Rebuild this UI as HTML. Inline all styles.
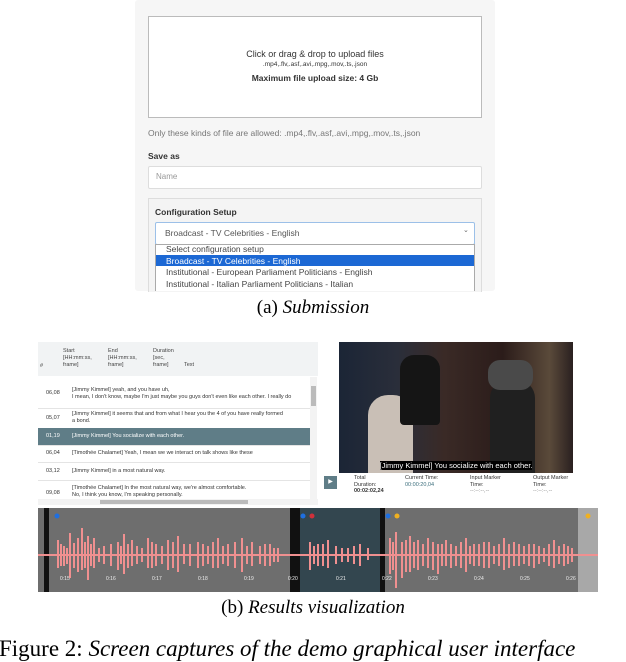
<!DOCTYPE html>
<html><head><style>
body{margin:0;width:626px;height:654px;background:#fff;position:relative;overflow:hidden;font-family:"Liberation Sans",sans-serif}
.a{position:absolute}
.s{font-size:8px;color:#333}
.row{position:absolute;left:38px;width:272px;border-bottom:1px solid #e4e4e4;font-size:5.5px;color:#333}
.row .n{position:absolute;left:8px}
.row .t{position:absolute;left:34px;line-height:7px}
</style></head><body>
<div class="a" style="left:135px;top:0;width:360px;height:291px;background:#f6f6f6;border-radius:3px"></div>
<div class="a" style="left:148px;top:16px;width:332px;height:100px;border:1px solid #bbb;background:#fff"></div>
<div class="a s" style="left:148px;top:49px;width:334px;text-align:center;font-size:9px">Click or drag &amp; drop to upload files</div>
<div class="a s" style="left:148px;top:61px;width:334px;text-align:center;font-size:6.5px">.mp4,.flv,.asf,.avi,.mpg,.mov,.ts,.json</div>
<div class="a s" style="left:148px;top:73px;width:334px;text-align:center;font-size:8.5px;font-weight:bold">Maximum file upload size: 4 Gb</div>
<div class="a" style="left:148px;top:128px;font-size:8.5px;color:#777">Only these kinds of file are allowed: .mp4,.flv,.asf,.avi,.mpg,.mov,.ts,.json</div>
<div class="a" style="left:148px;top:151px;font-size:8.5px;font-weight:bold;color:#333">Save as</div>
<div class="a" style="left:148px;top:166px;width:332px;height:21px;border:1px solid #ddd;background:#fff;border-radius:2px"></div>
<div class="a" style="left:156px;top:172px;font-size:8px;color:#999">Name</div>
<div class="a" style="left:148px;top:198px;width:332px;height:93px;border:1px solid #ddd;border-bottom:none;background:#f4f4f4"></div>
<div class="a" style="left:155px;top:207px;font-size:8.5px;font-weight:bold;color:#333">Configuration Setup</div>
<div class="a" style="left:155px;top:222px;width:318px;height:21px;border:1px solid #9cc0e8;background:#fff;border-radius:2px"></div>
<div class="a" style="left:165px;top:228px;font-size:8.5px;color:#555">Broadcast - TV Celebrities - English</div>
<div class="a" style="left:463px;top:226px;font-size:7px;color:#666">⌄</div>
<div class="a" style="left:155px;top:244px;width:318px;height:46px;border:1px solid #aaa;border-bottom:none;background:#fff"></div>
<div class="a" style="left:156px;top:255px;width:318px;height:11px;background:#1c68d4"></div>
<div class="a" style="left:166px;top:244px;font-size:8.5px;line-height:11.5px;color:#444">Select configuration setup<br><span style="color:#fff">Broadcast - TV Celebrities - English</span><br>Institutional - European Parliament Politicians - English<br>Institutional - Italian Parliament Politicians - Italian</div>
<div class="a" style="left:0;top:297px;width:626px;text-align:center;font-family:'Liberation Serif',serif;font-size:19px">(a) <i>Submission</i></div>

<div class="a" style="left:38px;top:342px;width:280px;height:166px;background:#fff"></div>
<div class="a" style="left:38px;top:342px;width:280px;height:34px;background:#f1f3f4"></div>
<div class="a" style="left:40px;top:363px;font-size:5.5px;color:#444">#</div>
<div class="a" style="left:63px;top:348px;font-size:5.5px;line-height:7px;color:#444">Start<br>[HH:mm:ss,<br>frame]</div>
<div class="a" style="left:108px;top:348px;font-size:5.5px;line-height:7px;color:#444">End<br>[HH:mm:ss,<br>frame]</div>
<div class="a" style="left:153px;top:348px;font-size:5.5px;line-height:7px;color:#444">Duration<br>[sec,<br>frame]</div>
<div class="a" style="left:184px;top:362px;font-size:5.5px;color:#444">Text</div>
<div class="row" style="top:380px;height:28px"><span class="n" style="top:10px">06,08</span><span class="t" style="top:7px;white-space:nowrap">[Jimmy Kimmel] yeah, and you have uh,<br>I mean, I don't know, maybe I'm just maybe you guys don't even like each other. I really do</span></div>
<div class="row" style="top:409px;height:19px"><span class="n" style="top:6px">05,07</span><span class="t" style="top:2px">[Jimmy Kimmel] it seems that and from what I hear you the 4 of you have really formed<br>a bond.</span></div>
<div class="row" style="top:428px;height:17px;background:#5f7d87;color:#fff"><span class="n" style="top:5px">01,19</span><span class="t" style="top:5px">[Jimmy Kimmel] You socialize with each other.</span></div>
<div class="row" style="top:445px;height:17px"><span class="n" style="top:5px">06,04</span><span class="t" style="top:5px">[Timothée Chalamet] Yeah, I mean we we interact on talk shows like these</span></div>
<div class="row" style="top:463px;height:17px"><span class="n" style="top:5px">03,12</span><span class="t" style="top:5px">[Jimmy Kimmel] in a most natural way.</span></div>
<div class="row" style="top:481px;height:18px;border:none"><span class="n" style="top:9px">09,08</span><span class="t" style="top:4px">[Timothée Chalamet] In the most natural way, we're almost comfortable.<br>No, I think you know, I'm speaking personally.</span></div>
<div class="a" style="left:310px;top:377px;width:7px;height:122px;background:#f3f3f3"></div>
<div class="a" style="left:311px;top:386px;width:5px;height:20px;background:#bbb"></div>
<div class="a" style="left:38px;top:499px;width:280px;height:6px;background:#f3f3f3"></div>
<div class="a" style="left:100px;top:500px;width:148px;height:4px;background:#bbb"></div>

<div class="a" style="left:339px;top:342px;width:234px;height:131px;background:linear-gradient(90deg,#1b2536 0%,#2a2e3a 25%,#3a2a26 45%,#2b1c1a 70%,#5a4a3a 90%,#2a2020 100%)"></div>
<div class="a" style="left:368px;top:395px;width:45px;height:78px;background:#c9bfb6;border-radius:20px 20px 0 0"></div>
<div class="a" style="left:400px;top:355px;width:40px;height:70px;background:#151515;border-radius:14px 14px 4px 4px"></div>
<div class="a" style="left:490px;top:380px;width:45px;height:93px;background:#202020;border-radius:18px 18px 0 0"></div>
<div class="a" style="left:488px;top:360px;width:45px;height:30px;background:#4a4a4a;border-radius:12px"></div>
<div class="a" style="left:339px;top:461px;width:234px;text-align:center;font-size:7.5px;color:#fff"><span style="background:#000">[Jimmy Kimmel] You socialize with each other.</span></div>
<div class="a" style="left:324px;top:476px;width:13px;height:13px;background:#5f7d87;color:#fff;font-size:6px;text-align:center;line-height:13px">▶</div>
<div class="a" style="left:354px;top:475px;font-size:5.5px;line-height:6.5px;color:#333">Total<br>Duration:<br><b>00:02:02,24</b></div>
<div class="a" style="left:405px;top:475px;font-size:5.5px;line-height:6.5px;color:#333">Current Time:<br><span style="color:#3b6e7c">00:00:20,04</span></div>
<div class="a" style="left:470px;top:475px;font-size:5.5px;line-height:6.5px;color:#333">Input Marker<br>Time:<br><span style="color:#888">--:--:--,--</span></div>
<div class="a" style="left:533px;top:475px;font-size:5.5px;line-height:6.5px;color:#333">Output Marker<br>Time:<br><span style="color:#888">--:--:--,--</span></div>

<svg class="a" style="left:38px;top:508px" width="560" height="84">
<rect width="560" height="84" fill="#6e6e6e"/>
<rect x="540" width="20" height="84" fill="#a8a8a8"/>
<rect x="6" width="5" height="84" fill="#111"/>
<rect x="252" width="10" height="84" fill="#111"/>
<rect x="262" width="80" height="84" fill="#33464f"/>
<rect x="342" width="5" height="84" fill="#111"/>
<g stroke="#f09090" stroke-width="2">
<path d="M0 47H560"/>
<path d="M20 32V60M26 38V58M32 25V70M36 35V60M44 20V62M50 28V72M56 30V60M66 38V56M80 34V62M86 26V66M94 32V58M104 40V54M110 30V60M118 36V58M130 32V62M140 28V64M146 36V56M160 34V60M170 38V56M180 30V60M190 36V58M204 30V64M214 34V58M222 38V56M232 36V58M240 40V54M272 34V62M280 36V58M290 32V60M298 38V56M310 40V54M322 36V58M330 40V52M352 30V66M358 24V80M364 34V70M372 28V64M380 32V62M390 30V60M400 36V66M408 32V58M418 38V58M428 30V64M436 36V58M446 34V60M456 38V56M466 30V62M476 34V58M486 38V56M496 36V60M506 40V54M516 32V60M526 36V58M534 40V54"/>
<path d="M23 36V58M29 40V56M40 30V64M47 34V60M53 36V58M61 40V54M73 36V58M83 38V56M90 36V60M99 38V56M114 34V60M124 38V56M135 34V60M152 36V58M165 36V58M175 34V60M185 38V56M197 34V60M209 38V56M227 36V58M236 40V54M276 38V56M285 36V58M304 40V54M316 38V56M355 34V62M368 32V64M376 34V60M385 36V58M395 34V62M404 36V58M413 36V60M423 34V60M432 38V56M441 36V58M451 34V60M461 36V58M471 36V60M481 36V58M491 36V58M501 38V56M511 36V58M521 38V56M530 38V56"/>
</g>
<g font-size="5" fill="#eee" font-family="Liberation Sans">
<text x="22" y="72">0:15</text><text x="68" y="72">0:16</text><text x="114" y="72">0:17</text><text x="160" y="72">0:18</text><text x="206" y="72">0:19</text><text x="250" y="72">0:20</text><text x="298" y="72">0:21</text><text x="344" y="72">0:22</text><text x="390" y="72">0:23</text><text x="436" y="72">0:24</text><text x="482" y="72">0:25</text><text x="528" y="72">0:26</text>
</g>
<circle cx="19" cy="8" r="2.5" fill="#1e6fe0"/><circle cx="265" cy="8" r="2.5" fill="#1e6fe0"/><circle cx="274" cy="8" r="2.5" fill="#d0303a"/><circle cx="350" cy="8" r="2.5" fill="#1e6fe0"/><circle cx="359" cy="8" r="2.5" fill="#f0b020"/><circle cx="550" cy="8" r="2.5" fill="#f0b020"/>
</svg>
<div class="a" style="left:0;top:597px;width:626px;text-align:center;font-family:'Liberation Serif',serif;font-size:19px">(b) <i>Results visualization</i></div>
<div class="a" style="left:-1px;top:636px;white-space:nowrap;font-family:'Liberation Serif',serif;font-size:23px">Figure 2: <i>Screen captures of the demo graphical user interface</i></div>
</body></html>
